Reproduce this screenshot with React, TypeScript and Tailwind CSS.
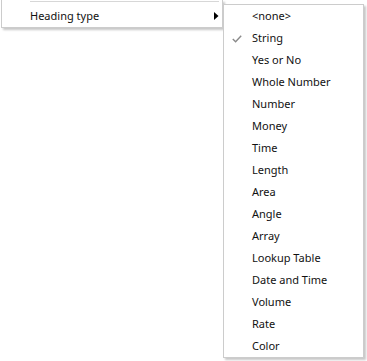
import React from "react";

const items = [
  "<none>",
  "String",
  "Yes or No",
  "Whole Number",
  "Number",
  "Money",
  "Time",
  "Length",
  "Area",
  "Angle",
  "Array",
  "Lookup Table",
  "Date and Time",
  "Volume",
  "Rate",
  "Color",
];

function Check() {
  return (
    <svg width="10" height="8" viewBox="0 0 10 8" className="mt-[3px]">
      <path d="M0.8 4 L3.6 6.8 L9.2 0.8" fill="none" stroke="#8a8a8a" strokeWidth="1.4" />
    </svg>
  );
}

export default function App() {
  return (
    <div
      className="relative w-[367px] h-[361px] bg-white overflow-hidden text-[11px] text-[#111111]"
      style={{ fontFamily: '"Noto Sans", "Open Sans", sans-serif' }}
    >
      {/* main menu */}
      <div className="ml-[1px] w-[222px] bg-white border-x border-b border-[#cccccc] shadow-[2px_2px_2px_rgba(0,0,0,0.22)] flex flex-col">
        <div className="pt-[1px] pb-[3px] pl-[28px]">
          <div className="w-[189px] h-px bg-[#d7d7d7]" />
        </div>
        <div className="flex items-center h-[22px] pl-[28px] pr-[3px]">
          <span className="flex-1 leading-none pb-[2px]">Heading type</span>
          <svg width="5" height="8" viewBox="0 0 5 8">
            <path d="M0 0 L4.5 4 L0 8 Z" fill="#000" />
          </svg>
        </div>
      </div>

      {/* submenu flyout */}
      <div className="absolute left-[223px] top-[4px] w-[141px] bg-white border border-[#cccccc] shadow-[2px_2px_2px_rgba(0,0,0,0.22)] flex flex-col">
        {items.map((it) => (
          <div key={it} className="flex items-center h-[22px] pb-[2px]">
            <div className="w-[28px] pl-[8px] flex items-center">
              {it === "String" ? <Check /> : null}
            </div>
            <span className="leading-none">{it}</span>
          </div>
        ))}
      </div>
    </div>
  );
}
